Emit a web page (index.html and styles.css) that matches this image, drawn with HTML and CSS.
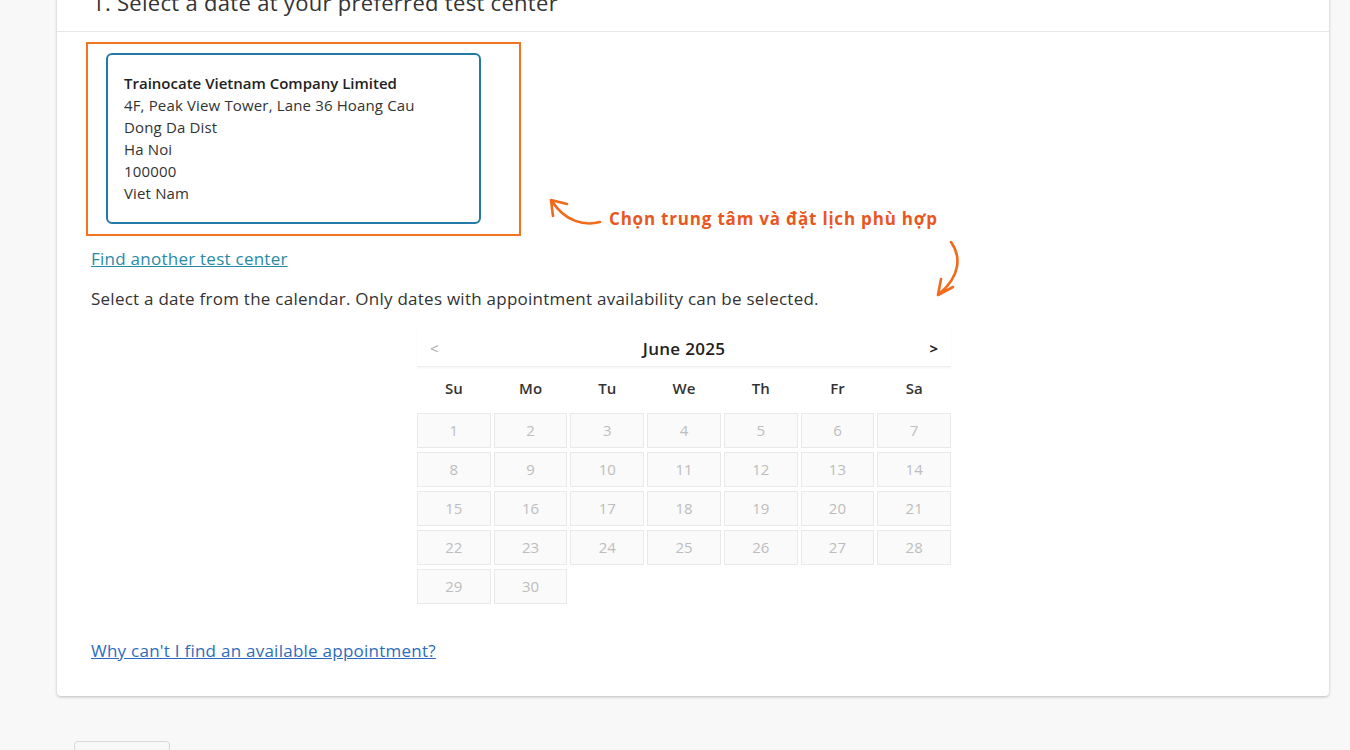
FILE: index.html
```html
<!DOCTYPE html>
<html lang="en">
<head>
  <meta charset="UTF-8">
  <title>Schedule exam - Select a date</title>
  <link rel="stylesheet" href="styles.css">
</head>
<body>
  <div class="panel">
    <div class="panel-head">1. Select a date at your preferred test center</div>

    <div class="panel-body">
      <div class="highlight">
        <div class="center-card">
          <strong>Trainocate Vietnam Company Limited</strong>
          <span>4F, Peak View Tower, Lane 36 Hoang Cau</span>
          <span>Dong Da Dist</span>
          <span>Ha Noi</span>
          <span>100000</span>
          <span>Viet Nam</span>
        </div>
      </div>

      <a class="link-teal" href="#">Find another test center</a>
      <p class="hint">Select a date from the calendar. Only dates with appointment availability can be selected.</p>

      <div class="calendar">
        <div class="cal-head">
          <span class="nav prev">&lt;</span>
          <span class="month">June 2025</span>
          <span class="nav next">&gt;</span>
        </div>
        <div class="cal-days">
          <span>Su</span><span>Mo</span><span>Tu</span><span>We</span><span>Th</span><span>Fr</span><span>Sa</span>
        </div>
        <div class="cal-grid">
          <span>1</span><span>2</span><span>3</span><span>4</span><span>5</span><span>6</span><span>7</span>
          <span>8</span><span>9</span><span>10</span><span>11</span><span>12</span><span>13</span><span>14</span>
          <span>15</span><span>16</span><span>17</span><span>18</span><span>19</span><span>20</span><span>21</span>
          <span>22</span><span>23</span><span>24</span><span>25</span><span>26</span><span>27</span><span>28</span>
          <span>29</span><span>30</span>
        </div>
      </div>

      <a class="link-blue" href="#">Why can't I find an available appointment?</a>

      <!-- annotation overlay -->
      <svg class="arrow arrow-left" width="60" height="35" viewBox="0 0 60 35">
        <path d="M55 27 C 40 31, 20 27, 7 6 M6 5 L22 9 M6 5 L8 21" fill="none" stroke="#f26a1b" stroke-width="2.6" stroke-linecap="round"/>
      </svg>
      <div class="note">Chọn trung tâm và đặt lịch phù hợp</div>
      <svg class="arrow arrow-down" width="35" height="62" viewBox="0 0 35 62">
        <path d="M21 4 C 31 18, 31 38, 9 56 M8 57 L11 41 M8 57 L23 49" fill="none" stroke="#f26a1b" stroke-width="2.6" stroke-linecap="round"/>
      </svg>
    </div>
  </div>

  <div class="actions">
    <button class="btn-back">Back</button>
  </div>
</body>
</html>
```

FILE: styles.css
```css
body {
  margin: 0;
  background: #f8f8f8;
  font-family: "Open Sans", "Noto Sans", sans-serif;
  color: #333;
}
.panel {
  margin: -40px 21px 0 57px;
  background: #fff;
  border-radius: 0 0 4px 4px;
  box-shadow: 0 1px 3px rgba(0, 0, 0, 0.25);
}
.panel-head {
  padding: 28px 35px 15px;
  font-size: 22px;
  letter-spacing: 0.3px;
  line-height: 28px;
  border-bottom: 1px solid #e7e7e7;
}
.panel-body {
  position: relative;
  padding: 10px 34px 33px;
}
.highlight {
  width: 375px;
  margin-left: -5px;
  padding: 9px 38px 10px 18px;
  border: 2px solid #f47321;
}
.center-card {
  width: 339px;
  padding: 17px 16px 18px;
  border: 2px solid #2479a5;
  border-radius: 6px;
  font-size: 15px;
  letter-spacing: 0.15px;
  line-height: 22px;
  color: #333;
}
.center-card strong,
.center-card span {
  display: block;
}
.center-card strong {
  font-weight: 600;
  letter-spacing: 0;
  color: #222;
}
.link-teal {
  display: inline-block;
  margin-top: 11px;
  font-size: 17px;
  letter-spacing: 0.25px;
  line-height: 24px;
  color: #2a8aa6;
}
.hint {
  margin: 16px 0 0;
  font-size: 17px;
  letter-spacing: 0.25px;
  line-height: 24px;
}
.calendar {
  width: 534px;
  margin: 19px 0 0 326px;
}
.cal-head {
  display: flex;
  justify-content: space-between;
  align-items: center;
  height: 36px;
  padding: 0 13px;
  border-bottom: 1px solid #eee;
  box-shadow: 0 1px 2px rgba(0, 0, 0, 0.05);
}
.month {
  font-size: 17px;
  font-weight: 600;
  letter-spacing: 0.3px;
  color: #222;
}
.nav {
  font-size: 15px;
}
.prev {
  color: #aaa;
}
.next {
  font-weight: 700;
  color: #222;
}
.cal-days {
  display: grid;
  grid-template-columns: repeat(7, 1fr);
  gap: 3px;
  height: 42px;
  align-items: center;
  margin-bottom: 4px;
}
.cal-days span {
  text-align: center;
  font-size: 15px;
  font-weight: 600;
  color: #333;
}
.cal-grid {
  display: grid;
  grid-template-columns: repeat(7, 1fr);
  gap: 4px 3px;
}
.cal-grid span {
  height: 33px;
  line-height: 33px;
  text-align: center;
  font-size: 15px;
  color: #bdbdbd;
  background: #fafafa;
  border: 1px solid #e9e9e9;
}
.link-blue {
  display: inline-block;
  margin-top: 35px;
  font-size: 17px;
  letter-spacing: 0.25px;
  line-height: 24px;
  color: #2d6cbd;
}
.arrow {
  position: absolute;
}
.arrow-left {
  left: 488px;
  top: 163px;
}
.arrow-down {
  left: 873px;
  top: 206px;
}
.note {
  position: absolute;
  left: 552px;
  top: 176px;
  font-size: 17px;
  font-weight: 700;
  letter-spacing: 0.8px;
  line-height: 22px;
  color: #e8571f;
}
.actions {
  padding: 45px 0 0 74px;
}
.btn-back {
  width: 96px;
  height: 32px;
  border: 1px solid #d5d9d9;
  border-radius: 4px;
  background: linear-gradient(#f9f9f9, #eee);
  font-family: inherit;
  font-size: 14px;
  color: #333;
}
```
